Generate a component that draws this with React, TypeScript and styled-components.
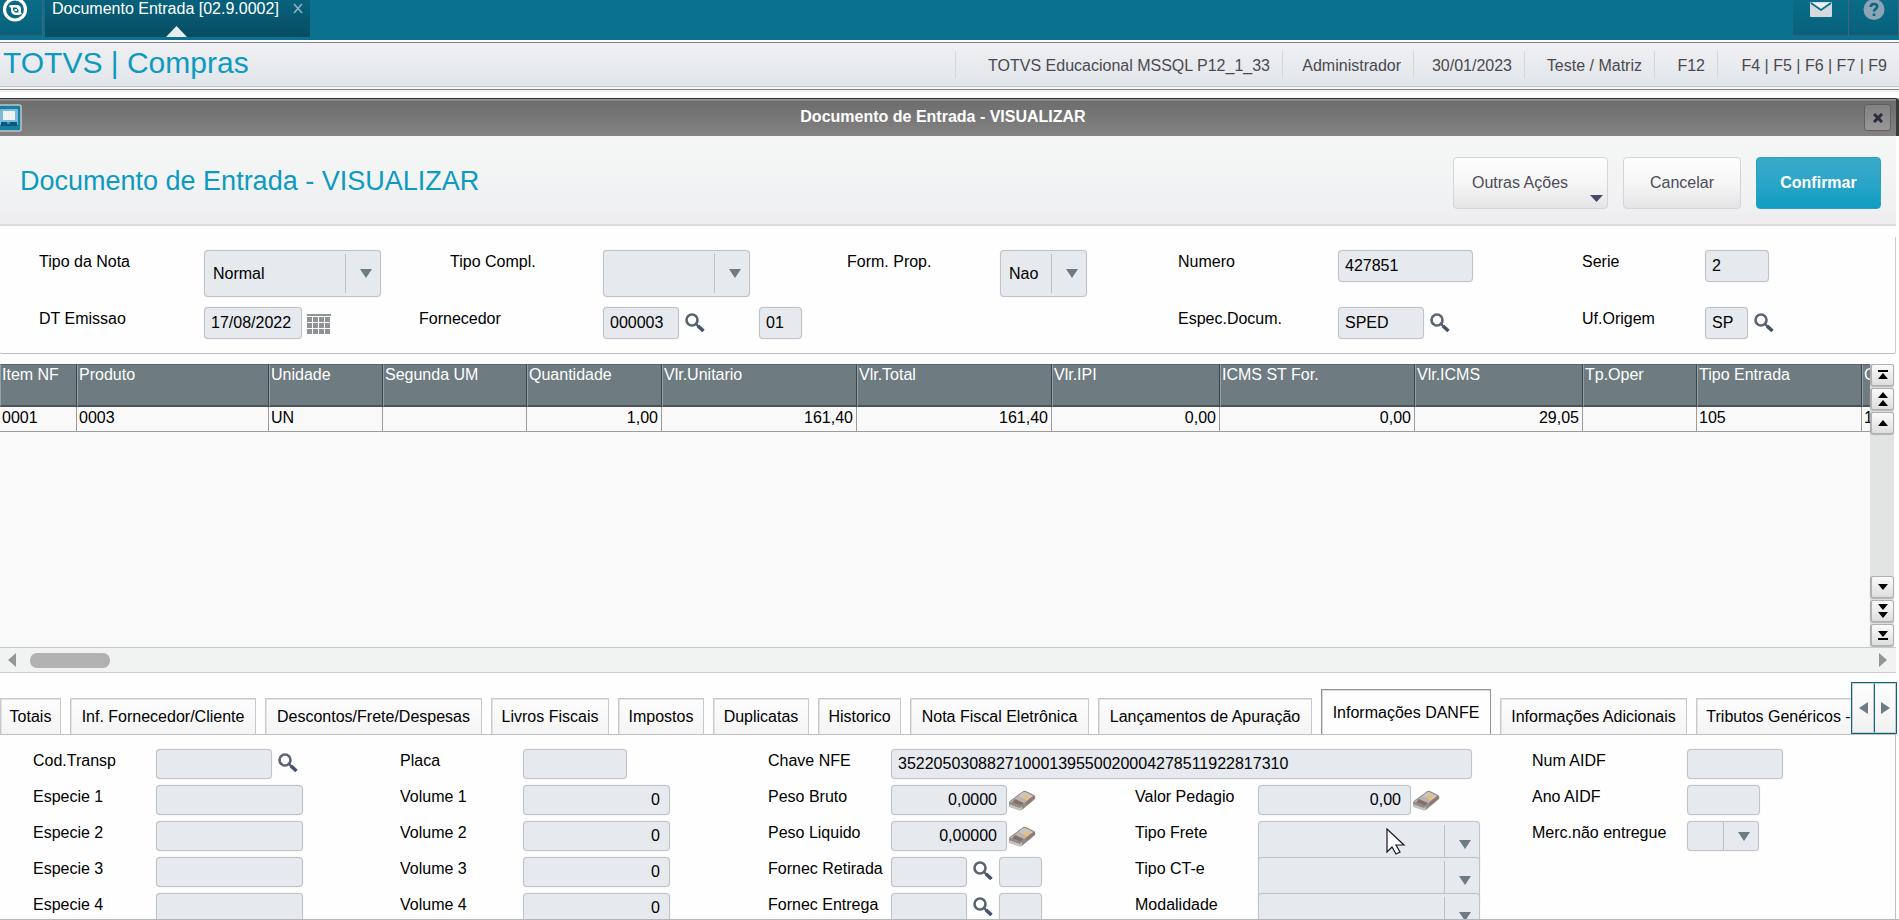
import React from "react";
import styled, { createGlobalStyle } from "styled-components";

const GlobalStyle = createGlobalStyle`
  *, *::before, *::after { box-sizing: border-box; }
  body { margin: 0; background: #fff; }
  body, button, input, select, table {
    font-family: "Liberation Sans", Arial, sans-serif;
    font-size: 16px;
    line-height: 18px;
    color: #000;
  }
  button { margin: 0; padding: 0; border: 0; background: none; cursor: pointer; }
`;

const Page = styled.div`
  display: flex;
  flex-direction: column;
  height: 100vh;
  overflow: hidden;
  background: #fefefe;
`;

/* Application bar */

const AppBar = styled.header`
  display: flex;
  flex: none;
  height: 40px;
  background: #0a718f;
`;

const BarButton = styled.button<{ $width: number }>`
  display: flex;
  justify-content: center;
  width: ${(p) => p.$width}px;
  height: 36px;
  border-right: 1px solid #4f6076;
  border-bottom: 1px solid #3a5c74;
  background: linear-gradient(#0a6c89, #07617c);
`;

const HomeButton = styled(BarButton)`
  justify-content: flex-start;
  padding-left: 2px;
`;

const AppTab = styled.div`
  position: relative;
  display: flex;
  gap: 7px;
  width: 265px;
  height: 37px;
  margin-left: 2px;
  padding-left: 7px;
  background: linear-gradient(#08627c, #064c62);
  color: #fff;
  white-space: nowrap;
`;

const AppTabTitle = styled.span`
  width: 234px;
`;

const AppTabClose = styled.button`
  display: flex;
  padding-top: 3px;
`;

const AppTabMark = styled.svg`
  position: absolute;
  left: 121px;
  bottom: 0;
`;

const Spacer = styled.div`
  flex: 1;
`;

/* Module bar */

const ModuleBar = styled.div`
  display: flex;
  flex: none;
  align-items: center;
  height: 45px;
  margin-top: 2px;
  border-top: 1px solid #858589;
  border-bottom: 1px solid #c3c7ca;
  background: linear-gradient(#f0f0f3, #e1e5ea);
`;

const ModuleName = styled.h1`
  flex: 1;
  margin: 0;
  padding: 0 0 3px 3px;
  font-size: 30px;
  line-height: 36px;
  font-weight: 400;
  color: #0c9ac0;
  white-space: nowrap;
`;

const InfoCell = styled.div<{ $width: number }>`
  width: ${(p) => p.$width}px;
  height: 27px;
  padding-right: 12px;
  border-left: 1px solid #d3d6da;
  line-height: 29px;
  text-align: right;
  color: #4a4a4e;
  white-space: nowrap;
`;

const BarEdge = styled.div`
  flex: none;
  height: 5px;
  margin-bottom: 6px;
  border-top: 2px solid #f6f6f8;
  border-bottom: 2px solid #f1f1f3;
  background: #858589;
`;

/* Window */

const TitleBar = styled.div`
  display: flex;
  flex: none;
  align-items: center;
  height: 38px;
  padding-right: 5px;
  border-top: 1px solid #2f2f2f;
  border-right: 3px solid #3a3a3a;
  border-radius: 0 3px 0 0;
  background: linear-gradient(#9a9a9a 1px, #6d6d6d 2px, #838383);
`;

const TitleText = styled.h2`
  flex: 1;
  margin: 0;
  padding-bottom: 1px;
  font-size: 16px;
  line-height: 18px;
  text-align: center;
  color: #fff;
`;

const CloseButton = styled.button`
  display: flex;
  align-items: center;
  justify-content: center;
  width: 27px;
  height: 27px;
  border: 1px solid #5d6163;
  border-radius: 3px;
  background: linear-gradient(#828282, #9a9696);
`;

const ActionBar = styled.div`
  display: flex;
  flex: none;
  gap: 15px;
  height: 90px;
  margin-right: 3px;
  padding: 21px 15px 0 20px;
  border-bottom: 2px solid #dedbde;
  background: linear-gradient(#f5f7f7, #f3f5f5 40%, #ededf0);
`;

const ActionTitle = styled.h2`
  flex: 1;
  margin: 0;
  font-size: 27px;
  line-height: 48px;
  font-weight: 400;
  color: #0c9ac0;
`;

const ActionButton = styled.button<{ $width: number; $primary?: boolean; $menu?: boolean }>`
  position: relative;
  width: ${(p) => p.$width}px;
  height: 52px;
  padding-left: ${(p) => (p.$menu ? 18 : 0)}px;
  border: 1px solid ${(p) => (p.$primary ? "#2e9ec4" : "#d6d4d7")};
  border-radius: 4px;
  background: ${(p) =>
    p.$primary
      ? "linear-gradient(#3aaaca, #2aa5c7 50%, #109dc2)"
      : "linear-gradient(#fefefe, #f6f6f6 50%, #e4e4e6)"};
  font-weight: ${(p) => (p.$primary ? 700 : 400)};
  text-align: ${(p) => (p.$menu ? "left" : "center")};
  color: ${(p) => (p.$primary ? "#fff" : "#4c4c58")};
`;

const MenuMark = styled.svg`
  position: absolute;
  right: 4px;
  bottom: 6px;
`;

/* Form controls */

const HeadForm = styled.form`
  display: flex;
  flex: none;
  flex-direction: column;
  margin: 11px 3px 0 0;
  padding: 13px 0 14px 39px;
  border-right: 1px solid #c9cbcc;
  border-bottom: 1px solid #bbbebf;
  border-radius: 0 0 2px 2px;
`;

const HeadRow = styled.div<{ $columns: string; $height: number }>`
  display: grid;
  grid-template-columns: ${(p) => p.$columns};
  height: ${(p) => p.$height}px;
`;

const Label = styled.label`
  padding-top: 3px;
  white-space: nowrap;
`;

const Controls = styled.div`
  position: relative;
  display: flex;
  align-items: flex-start;
`;

const StoreBox = styled.div`
  margin-left: 48px;
`;

const TextBox = styled.input<{ $width: number; $tall?: boolean; $right?: boolean }>`
  width: ${(p) => p.$width}px;
  height: ${(p) => (p.$tall ? 32 : 30)}px;
  padding: 0 ${(p) => (p.$right ? 9 : 0)}px 0 6px;
  border: 1px solid #bfc3c6;
  border-radius: 4px;
  background: #e6e9ee;
  box-shadow: 0 0 1px #c8cccf;
  text-align: ${(p) => (p.$right ? "right" : "left")};
  outline: none;
`;

const SelectFrame = styled.div<{ $width: number; $height: number }>`
  display: grid;
  flex: none;
  grid-template-columns: 1fr 35px;
  width: ${(p) => p.$width}px;
  height: ${(p) => p.$height}px;
  border: 1px solid #bfc3c6;
  border-radius: 4px;
  background: #e6e9ee;
  box-shadow: 0 0 1px #c8cccf;
`;

const SelectBox = styled.select`
  grid-area: 1 / 1 / 2 / 3;
  width: 100%;
  padding: 0 0 0 8px;
  border: 0;
  background: none;
  appearance: none;
  outline: none;
`;

const SelectArrow = styled.span<{ $inset: number }>`
  display: flex;
  grid-area: 1 / 2 / 2 / 3;
  align-items: center;
  justify-content: center;
  margin: ${(p) => p.$inset}px 0;
  padding-left: 6px;
  border-left: 1px solid #bdc1c4;
  pointer-events: none;
`;

const IconButton = styled.button<{ $width: number; $height: number }>`
  display: flex;
  flex: none;
  align-items: center;
  justify-content: center;
  width: ${(p) => p.$width}px;
  height: ${(p) => p.$height}px;
`;

/* Items grid */

const ItemsArea = styled.section`
  display: flex;
  flex: none;
  height: 283px;
  margin: 10px 5px 0 0;
  background: #f9f9f9;
`;

const TableView = styled.div`
  flex: 1;
  min-width: 0;
  overflow: hidden;
`;

const ItemsTable = styled.table`
  width: 1910px;
  table-layout: fixed;
  border-spacing: 0;
`;

const HeadCell = styled.th`
  height: 43px;
  padding: 1px 0 0 1px;
  border-top: 1px solid #5a6468;
  border-left: 1px solid #98a1a4;
  border-right: 1px solid #3c4548;
  border-bottom: 2px solid #4b5558;
  background: #6e7b80;
  font-weight: 400;
  text-align: left;
  vertical-align: top;
  color: #fff;
  white-space: nowrap;
`;

const Cell = styled.td<{ $right?: boolean }>`
  height: 25px;
  padding: 0 3px 3px 2px;
  border-right: 1px solid #9c9c9c;
  border-bottom: 1px solid #9c9c9c;
  text-align: ${(p) => (p.$right ? "right" : "left")};
  white-space: nowrap;
`;

const ScrollColumn = styled.div`
  display: flex;
  flex: none;
  flex-direction: column;
  gap: 2px;
  width: 24px;
  padding-bottom: 1px;
  background: #e1e4e3;
`;

const ScrollButton = styled.button`
  display: flex;
  flex: none;
  align-items: center;
  justify-content: center;
  height: 22px;
  border: 1px solid #b0b0b0;
  border-left-width: 2px;
  border-radius: 3px;
  background: linear-gradient(#fafafa, #dedede);
  box-shadow: 0 1px 1px #b4b4b4;
`;

const HorizontalBar = styled.div`
  display: flex;
  flex: none;
  align-items: center;
  gap: 14px;
  height: 26px;
  margin-right: 3px;
  padding: 0 9px 0 8px;
  border-top: 1px solid #c6cacf;
  border-bottom: 1px solid #cbcccd;
  background: #f1f3f2;
`;

const Thumb = styled.div`
  width: 80px;
  height: 15px;
  border-radius: 7px;
  background: #b1b1b1;
`;

const PlainButton = styled.button`
  display: flex;
`;

/* Tab strip and panel */

const TabStrip = styled.div`
  position: relative;
  display: flex;
  flex: none;
  align-items: flex-end;
  gap: 9px;
  height: 61px;
  margin-right: 2px;
  overflow: hidden;
`;

const Tab = styled.button<{ $width: number; $active?: boolean }>`
  flex: none;
  width: ${(p) => p.$width}px;
  height: ${(p) => (p.$active ? 45 : 36)}px;
  padding-top: ${(p) => (p.$active ? 2 : 0)}px;
  border: 1px solid ${(p) => (p.$active ? "#8e9294" : "#c9c9cb")};
  border-bottom: 0;
  box-shadow: inset 1px 1px 0 ${(p) => (p.$active ? "#d5d7d8" : "#e2e2e3")};
  background: ${(p) => (p.$active ? "#fefefe" : "linear-gradient(#fdfdfd, #f4f4f5)")};
  white-space: nowrap;
`;

const TabScroller = styled.div`
  position: absolute;
  right: 0;
  bottom: 0;
  display: flex;
  height: 52px;
  border: 1px solid #0b6680;
`;

const TabScrollButton = styled.button`
  display: flex;
  align-items: center;
  justify-content: center;
  width: 22px;
  border: 1px solid #c6cacd;
  background: linear-gradient(#fdfdfd, #f1f1f2);

  & + & {
    width: 22px;
    border-left: 1px solid #0b6680;
  }
`;

const DanfePanel = styled.form`
  display: grid;
  flex: 1;
  grid-template-columns: 367fr 368fr 367fr 397fr 363fr;
  grid-auto-rows: 36px;
  align-content: start;
  min-height: 0;
  margin-right: 3px;
  padding: 14px 0 0 33px;
  border-top: 1px solid #bdbfc0;
  border-right: 1px solid #bdbfc0;
  overflow: hidden;
`;

const Field = styled.div<{ $column: number; $span?: number; $label: number }>`
  display: grid;
  grid-column: ${(p) => p.$column} / span ${(p) => p.$span ?? 1};
  grid-template-columns: ${(p) => p.$label}px 1fr;
`;

const PageEnd = styled.div`
  flex: none;
  height: 1px;
  background: #b4b6b7;
`;

const Pointer = styled.svg`
  position: absolute;
  left: 128px;
  top: 7px;
`;

/* Drawings */

type TriangleProps = {
  dir: "down" | "left" | "right";
  width: number;
  height: number;
  color: string;
};

const Triangle = ({ dir, width, height, color }: TriangleProps) => {
  const points = {
    down: `0,0 ${width},0 ${width / 2},${height}`,
    left: `${width},0 ${width},${height} 0,${height / 2}`,
    right: `0,0 ${width},${height / 2} 0,${height}`,
  }[dir];
  return (
    <svg width={width} height={height} aria-hidden="true">
      <polygon points={points} fill={color} />
    </svg>
  );
};

const Search = ({ height = 32 }: { height?: number }) => (
  <IconButton type="button" $width={32} $height={height} aria-label="Pesquisar">
    <svg width="20" height="20" viewBox="0 0 20 20" fill="none">
      <circle cx="7" cy="7" r="5.5" stroke="#5a6470" strokeWidth="2.6" />
      <path d="M11 11l3 3" stroke="#56606c" strokeWidth="2.4" />
      <path d="M13 13l5.5 5" stroke="#44536a" strokeWidth="3.6" />
    </svg>
  </IconButton>
);

const Calendar = () => (
  <IconButton type="button" $width={34} $height={34} aria-label="Calendario">
    <svg width="24" height="21" viewBox="0 0 24 21" fill="#8e9396">
      <rect width="24" height="2" />
      {[3, 9, 15].map((y) =>
        [0, 6, 12, 18].map((x) => <rect key={`${x}-${y}`} x={x} y={y} width="5" height="5" />)
      )}
    </svg>
  </IconButton>
);

const Calculator = () => (
  <IconButton type="button" $width={30} $height={32} aria-label="Calculadora">
    <svg width="28" height="22" viewBox="0 0 28 22">
      <path d="M1 13Q1 11 3 10L14 2Q16 0 18 1l8 4q2 1 1 4L15 19q-2 2-4 1L2 17q-1 0-1-2z" fill="#8f8a87" />
      <path d="M2 12L14 3q2-1 3-1l8 4-12 10z" fill="#b9b5b0" />
      <path d="M14 3q2-1 3-1l8 4-5 5-9-5z" fill="#c9c6c1" />
      <path d="M16 5l5 1.500-2 3L14 7.500z" fill="#f0bd6c" />
      <path d="M7 9l9 4-3 3-9-3.500z" fill="#87706a" />
      <path d="M21 9l5-3 1 2-8 7-2-2z" fill="#94786d" />
      <path d="M1 14l11 4 2-2v3q-2 2-4 1L2 17z" fill="#c4c3c2" />
    </svg>
  </IconButton>
);

const ScrollMark = ({ path }: { path: string }) => (
  <svg width="12" height="14" viewBox="0 0 12 14" fill="#000">
    <path d={path} />
  </svg>
);

/* Composite fields */

type SelectProps = { id: string; width: number; height: number; value?: string };

const Select = ({ id, width, height, value = "" }: SelectProps) => (
  <SelectFrame $width={width} $height={height}>
    <SelectBox id={id} defaultValue={value}>
      <option>{value}</option>
    </SelectBox>
    <SelectArrow $inset={height > 40 ? 3 : 0}>
      <Triangle dir="down" width={12} height={9} color="#6d7b84" />
    </SelectArrow>
  </SelectFrame>
);

type Item = {
  id: string;
  label: string;
  column: number;
  span?: number;
  width: number;
  value?: string;
  kind?: "text" | "number" | "search" | "pair" | "calc" | "select" | "tallSelect";
};

const ITEMS: Item[] = [
  { id: "transp", label: "Cod.Transp", column: 1, width: 116, kind: "search" },
  { id: "placa", label: "Placa", column: 2, width: 104 },
  { id: "chave", label: "Chave NFE", column: 3, span: 2, width: 581, value: "35220503088271000139550020004278511922817310" },
  { id: "numAidf", label: "Num AIDF", column: 5, width: 96 },
  { id: "especie1", label: "Especie 1", column: 1, width: 147 },
  { id: "volume1", label: "Volume 1", column: 2, width: 147, kind: "number", value: "0" },
  { id: "pesoBruto", label: "Peso Bruto", column: 3, width: 116, kind: "calc", value: "0,0000" },
  { id: "pedagio", label: "Valor Pedagio", column: 4, width: 153, kind: "calc", value: "0,00" },
  { id: "anoAidf", label: "Ano AIDF", column: 5, width: 73 },
  { id: "especie2", label: "Especie 2", column: 1, width: 147 },
  { id: "volume2", label: "Volume 2", column: 2, width: 147, kind: "number", value: "0" },
  { id: "pesoLiquido", label: "Peso Liquido", column: 3, width: 116, kind: "calc", value: "0,00000" },
  { id: "frete", label: "Tipo Frete", column: 4, width: 222, kind: "tallSelect" },
  { id: "merc", label: "Merc.não entregue", column: 5, width: 72, kind: "select" },
  { id: "especie3", label: "Especie 3", column: 1, width: 147 },
  { id: "volume3", label: "Volume 3", column: 2, width: 147, kind: "number", value: "0" },
  { id: "retirada", label: "Fornec Retirada", column: 3, width: 76, kind: "pair" },
  { id: "cte", label: "Tipo CT-e", column: 4, width: 222, kind: "tallSelect" },
  { id: "especie4", label: "Especie 4", column: 1, width: 147 },
  { id: "volume4", label: "Volume 4", column: 2, width: 147, kind: "number", value: "0" },
  { id: "entrega", label: "Fornec Entrega", column: 3, width: 76, kind: "pair" },
  { id: "modalidade", label: "Modalidade", column: 4, width: 222, kind: "tallSelect" },
];

const DanfeField = ({ item }: { item: Item }) => {
  const { id, label, column, span, width, value = "", kind = "text" } = item;
  const isSelect = kind === "select" || kind === "tallSelect";
  return (
    <Field $column={column} $span={span} $label={column === 5 ? 155 : 123}>
      <Label htmlFor={id}>{label}</Label>
      <Controls>
        {isSelect ? (
          <Select id={id} width={width} height={kind === "select" ? 30 : 47} />
        ) : (
          <TextBox
            id={id}
            $width={width}
            $right={kind === "number" || kind === "calc"}
            defaultValue={value}
            readOnly
          />
        )}
        {(kind === "search" || kind === "pair") && <Search height={28} />}
        {kind === "pair" && <TextBox $width={43} aria-label={`${label} loja`} readOnly />}
        {kind === "calc" && <Calculator />}
        {id === "frete" && (
          <Pointer width="20" height="28" viewBox="0 0 20 28">
            <path d="M1 1v23l5-5 4 7 4-2-4-7h8z" fill="#fff" stroke="#15152a" strokeWidth="1.2" />
          </Pointer>
        )}
      </Controls>
    </Field>
  );
};

const COLUMNS = [
  { title: "Item NF", width: 77, value: "0001" },
  { title: "Produto", width: 192, value: "0003" },
  { title: "Unidade", width: 114, value: "UN" },
  { title: "Segunda UM", width: 144, value: "" },
  { title: "Quantidade", width: 135, value: "1,00", right: true },
  { title: "Vlr.Unitario", width: 195, value: "161,40", right: true },
  { title: "Vlr.Total", width: 195, value: "161,40", right: true },
  { title: "Vlr.IPI", width: 168, value: "0,00", right: true },
  { title: "ICMS ST For.", width: 195, value: "0,00", right: true },
  { title: "Vlr.ICMS", width: 168, value: "29,05", right: true },
  { title: "Tp.Oper", width: 114, value: "" },
  { title: "Tipo Entrada", width: 165, value: "105" },
  { title: "C", width: 48, value: "1" },
];

const TABS = [
  { title: "Totais", width: 61 },
  { title: "Inf. Fornecedor/Cliente", width: 186 },
  { title: "Descontos/Frete/Despesas", width: 217 },
  { title: "Livros Fiscais", width: 118 },
  { title: "Impostos", width: 86 },
  { title: "Duplicatas", width: 96 },
  { title: "Historico", width: 83 },
  { title: "Nota Fiscal Eletrônica", width: 179 },
  { title: "Lançamentos de Apuração", width: 214 },
  { title: "Informações DANFE", width: 170, active: true },
  { title: "Informações Adicionais", width: 187 },
  { title: "Tributos Genéricos -", width: 165 },
];

const INFO = [
  { text: "TOTVS Educacional MSSQL P12_1_33", width: 327 },
  { text: "Administrador", width: 131 },
  { text: "30/01/2023", width: 111 },
  { text: "Teste / Matriz", width: 130 },
  { text: "F12", width: 63 },
  { text: "F4 | F5 | F6 | F7 | F9", width: 182 },
];

const SCROLL_UP = [
  { name: "Primeiro", path: "M1 2h10v2H1zM6 5l5 6H1z" },
  { name: "Pagina acima", path: "M6 0l5 6H1zM6 8l5 6H1z" },
  { name: "Acima", path: "M6 4l5 6H1z" },
];

const SCROLL_DOWN = [
  { name: "Abaixo", path: "M1 4h10l-5 6z" },
  { name: "Pagina abaixo", path: "M1 0h10l-5 6zM1 8h10l-5 6z" },
  { name: "Ultimo", path: "M1 3h10l-5 6zM1 10h10v2H1z" },
];

export default function App() {
  return (
    <Page>
      <GlobalStyle />
      <AppBar>
        <HomeButton type="button" $width={43} aria-label="Inicio">
          <svg width="26" height="24" viewBox="0 0 26 24" fill="none">
            <circle cx="13" cy="9.500" r="10.500" stroke="#fff" strokeWidth="3.200" />
            <path d="M6.500 6Q8 5 10 5h6q3 1 3 4v3.500l1 1.500q-2 1-4 1h-3q-4-1-4-5V8z" fill="#fff" />
            <path d="M11 7.500h3.500l2 2.500v2.500H13L11 10z" fill="#0a6c89" />
            <path d="M12.500 9h2.500v2h-2.500z" fill="#fff" />
          </svg>
        </HomeButton>
        <AppTab>
          <AppTabTitle>Documento Entrada [02.9.0002]</AppTabTitle>
          <AppTabClose type="button" aria-label="Fechar aba">
            <svg width="10" height="11" viewBox="0 0 10 11" stroke="#8fb3c3" strokeWidth="1.600">
              <path d="M1 1l8 9M9 1l-8 9" />
            </svg>
          </AppTabClose>
          <AppTabMark width="21" height="11">
            <polygon points="0,11 10.5,0 21,11" fill="#e9ebef" />
          </AppTabMark>
        </AppTab>
        <Spacer />
        <BarButton type="button" $width={56} aria-label="Mensagens">
          <svg width="22" height="18" viewBox="0 0 22 18">
            <rect y="2" width="22" height="15" rx="1" fill="#d5d9dc" />
            <path d="M1 3l10 7 10-7" fill="#e6f1f4" stroke="#0a6c89" strokeWidth="1.800" />
          </svg>
        </BarButton>
        <BarButton type="button" $width={50} aria-label="Ajuda">
          <svg width="22" height="21" viewBox="0 0 22 21" fill="none">
            <circle cx="11" cy="9.500" r="10.500" fill="#8ba5b5" />
            <path d="M7.800 7c0-4 6.400-4 6.400-.5 0 2.500-3.200 2.500-3.200 5M11 13.500v2.500" stroke="#07657f" strokeWidth="2.600" />
          </svg>
        </BarButton>
      </AppBar>

      <ModuleBar>
        <ModuleName>TOTVS | Compras</ModuleName>
        {INFO.map((cell) => (
          <InfoCell key={cell.text} $width={cell.width}>
            {cell.text}
          </InfoCell>
        ))}
      </ModuleBar>
      <BarEdge />

      <TitleBar>
        <svg width="22" height="28" viewBox="0 0 22 28">
          <rect x="-4" y="1" width="25" height="26" rx="2" fill="#15809f" stroke="#bcc6cb" strokeWidth="1.500" />
          <rect x="0" y="5" width="18" height="16" rx="1" fill="#7cb9df" />
          <rect x="3" y="7" width="12" height="9" fill="#f0f2f3" />
          <path d="M1 18h16v4H1z" fill="#0b5878" />
          <path d="M7 18h3v2H7z" fill="#3f8fd0" />
        </svg>
        <TitleText>Documento de Entrada - VISUALIZAR</TitleText>
        <CloseButton type="button" aria-label="Fechar">
          <svg width="10" height="10" viewBox="0 0 10 10" stroke="#2b2a40" strokeWidth="3">
            <path d="M1 1l8 8M9 1l-8 8" />
          </svg>
        </CloseButton>
      </TitleBar>

      <ActionBar>
        <ActionTitle>Documento de Entrada - VISUALIZAR</ActionTitle>
        <ActionButton type="button" $width={155} $menu>
          Outras Ações
          <MenuMark width="13" height="7">
            <polygon points="0,0 13,0 6.5,7" fill="#474a66" />
          </MenuMark>
        </ActionButton>
        <ActionButton type="button" $width={118}>Cancelar</ActionButton>
        <ActionButton type="button" $width={125} $primary>Confirmar</ActionButton>
      </ActionBar>

      <HeadForm>
        <HeadRow $columns="165fr 246fr 153fr 244fr 153fr 178fr 160fr 244fr 123fr 190fr" $height={57}>
          <Label htmlFor="tipoNota">Tipo da Nota</Label>
          <Controls>
            <Select id="tipoNota" width={177} height={47} value="Normal" />
          </Controls>
          <Label htmlFor="tipoCompl">Tipo Compl.</Label>
          <Controls>
            <Select id="tipoCompl" width={147} height={47} />
          </Controls>
          <Label htmlFor="formProp">Form. Prop.</Label>
          <Controls>
            <Select id="formProp" width={87} height={47} value="Nao" />
          </Controls>
          <Label htmlFor="numero">Numero</Label>
          <Controls>
            <TextBox id="numero" $width={135} $tall defaultValue="427851" readOnly />
          </Controls>
          <Label htmlFor="serie">Serie</Label>
          <Controls>
            <TextBox id="serie" $width={64} $tall defaultValue="2" readOnly />
          </Controls>
        </HeadRow>
        <HeadRow $columns="165fr 215fr 184fr 575fr 160fr 244fr 123fr 190fr" $height={32}>
          <Label htmlFor="emissao">DT Emissao</Label>
          <Controls>
            <TextBox id="emissao" $width={98} $tall defaultValue="17/08/2022" readOnly />
            <Calendar />
          </Controls>
          <Label htmlFor="fornecedor">Fornecedor</Label>
          <Controls>
            <TextBox id="fornecedor" $width={76} $tall defaultValue="000003" readOnly />
            <Search />
            <StoreBox>
              <TextBox $width={43} $tall defaultValue="01" aria-label="Loja" readOnly />
            </StoreBox>
          </Controls>
          <Label htmlFor="espec">Espec.Docum.</Label>
          <Controls>
            <TextBox id="espec" $width={86} $tall defaultValue="SPED" readOnly />
            <Search />
          </Controls>
          <Label htmlFor="uf">Uf.Origem</Label>
          <Controls>
            <TextBox id="uf" $width={43} $tall defaultValue="SP" readOnly />
            <Search />
          </Controls>
        </HeadRow>
      </HeadForm>

      <ItemsArea>
        <TableView>
          <ItemsTable>
            <colgroup>
              {COLUMNS.map((c) => (
                <col key={c.title} width={c.width} />
              ))}
            </colgroup>
            <thead>
              <tr>
                {COLUMNS.map((c) => (
                  <HeadCell key={c.title} scope="col">{c.title}</HeadCell>
                ))}
              </tr>
            </thead>
            <tbody>
              <tr>
                {COLUMNS.map((c) => (
                  <Cell key={c.title} $right={c.right}>{c.value}</Cell>
                ))}
              </tr>
            </tbody>
          </ItemsTable>
        </TableView>
        <ScrollColumn>
          {SCROLL_UP.map((mark) => (
            <ScrollButton key={mark.name} type="button" aria-label={mark.name}>
              <ScrollMark path={mark.path} />
            </ScrollButton>
          ))}
          <Spacer />
          {SCROLL_DOWN.map((mark) => (
            <ScrollButton key={mark.name} type="button" aria-label={mark.name}>
              <ScrollMark path={mark.path} />
            </ScrollButton>
          ))}
        </ScrollColumn>
      </ItemsArea>

      <HorizontalBar>
        <PlainButton type="button" aria-label="Rolar para a esquerda">
          <Triangle dir="left" width={8} height={14} color="#929699" />
        </PlainButton>
        <Thumb />
        <Spacer />
        <PlainButton type="button" aria-label="Rolar para a direita">
          <Triangle dir="right" width={8} height={14} color="#929699" />
        </PlainButton>
      </HorizontalBar>

      <TabStrip>
        {TABS.map((tab) => (
          <Tab key={tab.title} type="button" $width={tab.width} $active={tab.active}>
            {tab.title}
          </Tab>
        ))}
        <TabScroller>
          <TabScrollButton type="button" aria-label="Abas anteriores">
            <Triangle dir="left" width={9} height={12} color="#6d7b84" />
          </TabScrollButton>
          <TabScrollButton type="button" aria-label="Proximas abas">
            <Triangle dir="right" width={9} height={12} color="#6d7b84" />
          </TabScrollButton>
        </TabScroller>
      </TabStrip>

      <DanfePanel>
        {ITEMS.map((item) => (
          <DanfeField key={item.id} item={item} />
        ))}
      </DanfePanel>
      <PageEnd />
    </Page>
  );
}
